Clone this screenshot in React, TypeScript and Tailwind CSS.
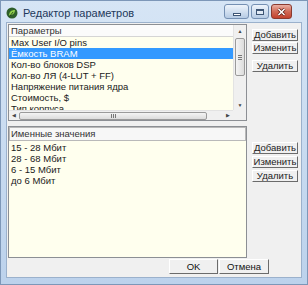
import React from "react";

const params = [
  "Max User I/O pins",
  "Ёмкость BRAM",
  "Кол-во блоков DSP",
  "Кол-во ЛЯ (4-LUT + FF)",
  "Напряжение питания ядра",
  "Стоимость, $",
  "Тип корпуса",
];

const values = ["15 - 28 Мбит", "28 - 68 Мбит", "6 - 15 Мбит", "до 6 Мбит"];

function Btn({ label, className = "" }: { label: string; className?: string }) {
  return (
    <button
      className={`h-[12px] w-[46px] flex items-center justify-center bg-[#f0f0f0] border-t border-l border-t-white border-l-white border-r border-b border-r-[#6b6b6b] border-b-[#6b6b6b] text-[9.5px] leading-none text-[#222] ${className}`}
    >
      {label}
    </button>
  );
}

function TitleButtons() {
  return (
    <div className="flex items-start gap-[2px] mt-[3px]">
      <div className="w-[25px] h-[15px] rounded-[3px] border border-[#7590b3] bg-gradient-to-b from-[#eef4fb] via-[#d2e0f0] to-[#b6cbe4] flex items-center justify-center">
        <div className="w-[8px] h-[3px] mt-[5px] bg-white border border-[#3e5675]" />
      </div>
      <div className="w-[18px] h-[15px] rounded-[3px] border border-[#7590b3] bg-gradient-to-b from-[#eef4fb] via-[#d2e0f0] to-[#b6cbe4] flex items-center justify-center">
        <div className="w-[8px] h-[6px] border border-[#3e5675] border-t-2 bg-white/40" />
      </div>
      <div className="w-[21px] h-[15px] rounded-[3px] border border-[#8a3b30] bg-gradient-to-b from-[#eab0a4] via-[#d06a57] to-[#c2402c] flex items-center justify-center">
        <svg width="9" height="8" viewBox="0 0 9 8">
          <path d="M1.5 1 L7.5 7 M7.5 1 L1.5 7" stroke="#5a1a12" strokeWidth="3" />
          <path d="M1.5 1 L7.5 7 M7.5 1 L1.5 7" stroke="#ffffff" strokeWidth="1.6" />
        </svg>
      </div>
    </div>
  );
}

export default function App() {
  return (
    <div className="w-[308px] h-[285px] flex flex-col bg-gradient-to-b from-[#d6e5f5] to-[#bcd2ec] border border-[#7d97b8] font-['Liberation_Sans',sans-serif] text-[#111] overflow-hidden">
      {/* ── Title bar ── */}
      <div className="h-[21px] flex-shrink-0 flex items-start pl-[5px] pr-[15px]">
        <svg width="12" height="12" viewBox="0 0 12 12" className="mt-[6px]">
          <circle cx="6" cy="6" r="5.5" fill="#2f5f2a" />
          <path d="M3 9 C3 5 5 3 9 3 C9 6 7 8 4 8 Z" fill="#8fcf4a" />
          <path d="M3.5 9.5 L7 5" stroke="#1d3a19" strokeWidth="0.8" />
        </svg>
        <span className="ml-[5px] mt-[6px] text-[11px] leading-[12px] text-[#1e395b]">Редактор параметров</span>
        <div className="flex-1" />
        <TitleButtons />
      </div>

      {/* ── Client area ── */}
      <div className="mx-[5px] h-[256px] flex-shrink-0 bg-[#f0f0f0] border border-[#9bb1cc] flex flex-col pt-[1px] pl-[1px]">
        {/* Parameters list */}
        <div className="flex gap-[5px]">
          <div className="w-[239px] h-[97px] border border-[#8c8f94] grid grid-cols-[1fr_13px] grid-rows-[1fr_10px] bg-[#ffffee]">
            <div className="flex flex-col overflow-hidden">
              <div className="h-[12px] flex-shrink-0 bg-[#fbfbfb] border-b border-[#d5d5d5] text-[9.5px] leading-[11px] pl-[2px] text-[#333]">
                Параметры
              </div>
              {params.map((p, i) => (
                <div
                  key={p}
                  className={`h-[11px] flex-shrink-0 text-[9.5px] leading-[11px] pl-[2px] whitespace-nowrap ${
                    i === 1 ? "bg-[#3399ff] text-white" : "text-[#1a1a1a]"
                  }`}
                >
                  {p}
                </div>
              ))}
            </div>
            {/* vertical scrollbar */}
            <div className="bg-[#f0f0f0] border-l border-[#e3e3e3] flex flex-col items-center">
              <span className="text-[5px] leading-[8px] text-[#444] mt-[2px]">▲</span>
              <div className="w-[10px] h-[38px] mt-[3px] rounded-[2px] border border-[#9a9a9a] bg-gradient-to-r from-[#f4f4f4] to-[#dcdcdc] flex flex-col items-center justify-center gap-[1px]">
                <div className="w-[4px] h-px bg-[#777]" />
                <div className="w-[4px] h-px bg-[#777]" />
                <div className="w-[4px] h-px bg-[#777]" />
              </div>
              <div className="flex-1" />
              <span className="text-[5px] leading-[8px] text-[#444] mb-[1px]">▼</span>
            </div>
            {/* horizontal scrollbar */}
            <div className="bg-[#f0f0f0] border-t border-[#e3e3e3] flex items-center">
              <span className="text-[5px] leading-none text-[#444] ml-[3px]">◀</span>
              <div className="w-[188px] h-[8px] ml-[3px] rounded-[2px] border border-[#9a9a9a] bg-gradient-to-b from-[#f4f4f4] to-[#dcdcdc] flex items-center justify-center gap-[1px]">
                <div className="w-px h-[4px] bg-[#777]" />
                <div className="w-px h-[4px] bg-[#777]" />
                <div className="w-px h-[4px] bg-[#777]" />
              </div>
              <div className="flex-1" />
              <span className="text-[5px] leading-none text-[#444] mr-[3px]">▶</span>
            </div>
            <div className="bg-[#f0f0f0]" />
          </div>
          <div className="flex flex-col pt-[5px]">
            <Btn label="Добавить" />
            <Btn label="Изменить" className="mt-[1px]" />
            <Btn label="Удалить" className="mt-[6px]" />
          </div>
        </div>

        {/* Named values list */}
        <div className="flex gap-[5px] mt-[5px]">
          <div className="w-[239px] h-[132px] border border-[#8c8f94] bg-[#ffffee] flex flex-col">
            <div className="h-[14px] flex-shrink-0 bg-[#f7f7f7] border border-[#b9b9b9] text-[9.5px] leading-[12px] pl-[1px] text-[#333]">
              Именные значения
            </div>
            <div className="h-px" />
            {values.map((v) => (
              <div key={v} className="h-[11px] text-[9.5px] leading-[11px] pl-[2px] whitespace-nowrap text-[#1a1a1a]">
                {v}
              </div>
            ))}
          </div>
          <div className="flex flex-col pt-[16px]">
            <Btn label="Добавить" />
            <Btn label="Изменить" className="mt-[2px]" />
            <Btn label="Удалить" className="mt-[2px]" />
          </div>
        </div>

        {/* OK / Cancel */}
        <div className="flex justify-end gap-[1px] pr-[32px] mt-[1px]">
          <button className="w-[49px] h-[15px] bg-[#f0f0f0] border-t border-l border-t-white border-l-white border-r border-b border-r-[#6b6b6b] border-b-[#6b6b6b] text-[9.5px] leading-none">
            OK
          </button>
          <button className="w-[50px] h-[15px] bg-[#f0f0f0] border-t border-l border-t-white border-l-white border-r border-b border-r-[#6b6b6b] border-b-[#6b6b6b] text-[9.5px] leading-none">
            Отмена
          </button>
        </div>
      </div>
    </div>
  );
}
